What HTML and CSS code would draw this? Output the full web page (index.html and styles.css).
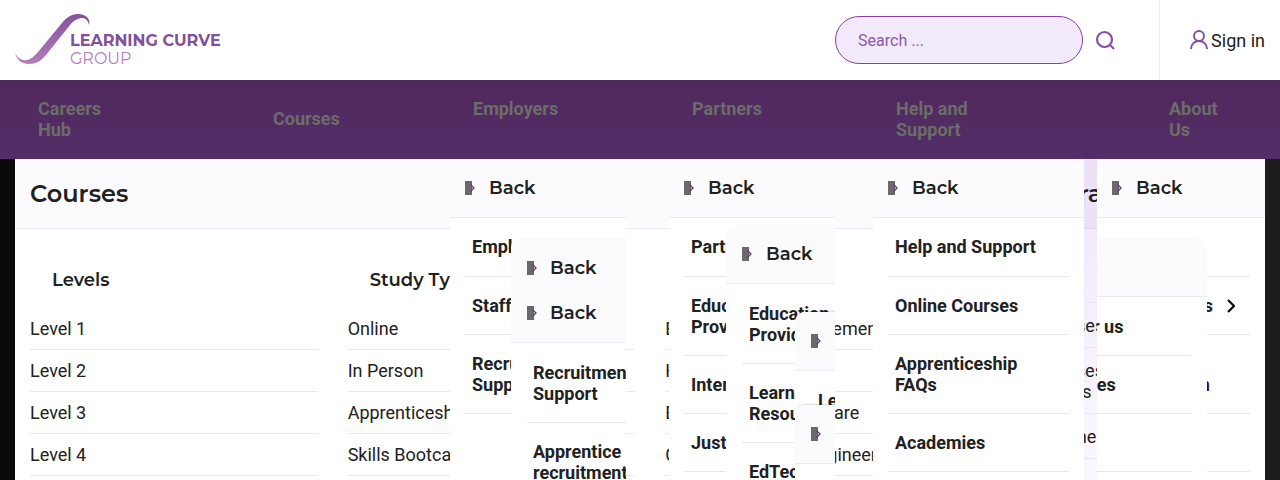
FILE: index.html
```
<!DOCTYPE html>
<html lang="en">
<head>
    <meta charset="UTF-8">
    <meta name="viewport" content="width=device-width, initial-scale=1.0">
    <title>Learning Curve Group</title>
    <link rel="stylesheet" href="styles.css">
</head>
<body>
    <svg width="0" height="0" class="sprite" aria-hidden="true">
        <symbol id="back-icon" viewBox="0 0 10 14">
            <rect width="7" height="14" fill="#6b6a6b"/>
            <path d="M5.5 3.5 L9 7 L5.5 10.5" fill="none" stroke="#5b3a6b" stroke-width="1.3"/>
        </symbol>
    </svg>

    <header class="header">
        <a href="#" class="logo" aria-label="Learning Curve Group">
            <svg class="logo-mark" width="76" height="52" viewBox="0 0 76 52" aria-hidden="true">
                <defs>
                    <linearGradient id="curve" x1="0" y1="1" x2="0" y2="0">
                        <stop offset="0" stop-color="#b67db9"/>
                        <stop offset="1" stop-color="#84509c"/>
                    </linearGradient>
                </defs>
                <path fill="url(#curve)" d="M0 40 C1 47 6 52 14 52 C22 52 27 48 31 43 L55 13 C59 8 64 6 67 6 C71 6 73 9 74 13 C76 7 71 2 63 2 C56 2 51 6 47 11 L23 40 C18 46 13 49 8 48 C4 47 1 44 0 40 Z"/>
            </svg>
            <span class="logo-text">
                <b>LEARNING CURVE</b>
                <span>GROUP</span>
            </span>
        </a>
        <form class="search">
            <input type="text" class="search-input" placeholder="Search ..." aria-label="Search">
            <button type="button" class="search-btn" aria-label="Search">
                <svg width="20" height="20" viewBox="0 0 20 20" fill="none" stroke="#86509f" stroke-width="2.2">
                    <circle cx="9.5" cy="9.5" r="7.5"/>
                    <path d="M15 15 L19 19"/>
                </svg>
            </button>
        </form>
        <a href="#" class="signin">
            <svg width="20" height="20" viewBox="0 0 20 20" fill="none" stroke="#86509f" stroke-width="2">
                <circle cx="10" cy="6" r="5"/>
                <path d="M2 19 C2 14 5.5 11 10 11 C14.5 11 18 14 18 19"/>
            </svg>
            <span>Sign in</span>
        </a>
    </header>

    <nav class="navbar">
        <ul class="nav">
            <li class="nav-item"><a href="#" class="nav-link">Careers<br>Hub</a></li>
            <li class="nav-item nav-item-mega">
                <a href="#" class="nav-link">Courses</a>
                <div class="mega">
                    <div class="mega-main">
                        <h2 class="mega-title">Courses</h2>
                        <div class="mega-cols">
                            <div class="mega-col">
                                <h3>Levels</h3>
                                <a href="#">Level 1</a>
                                <a href="#">Level 2</a>
                                <a href="#">Level 3</a>
                                <a href="#">Level 4</a>
                            </div>
                            <div class="mega-col">
                                <h3>Study Type</h3>
                                <a href="#">Online</a>
                                <a href="#">In Person</a>
                                <a href="#">Apprenticeship</a>
                                <a href="#">Skills Bootcamp</a>
                            </div>
                            <div class="mega-col">
                                <h3>Subject</h3>
                                <a href="#">Business and Management</a>
                                <a href="#">Health</a>
                                <a href="#">Education and Childcare</a>
                                <a href="#">Construction and Engineering</a>
                            </div>
                        </div>
                    </div>
                    <div class="mega-side">
                        <h2 class="mega-title">Online training</h2>
                        <div class="side-links">
                            <a href="#">Higher courses</a>
                            <a href="#">Career courses<br>and diplomas</a>
                            <a href="#">Learn anytime</a>
                        </div>
                    </div>
                </div>
            </li>
            <li class="nav-item">
                <a href="#" class="nav-link">Employers</a>
                <div class="menu menu-employers">
                    <button type="button" class="back"><svg><use href="#back-icon"/></svg>Back</button>
                    <ul class="menu-list">
                        <li><a href="#">Employers</a></li>
                        <li><a href="#">Staff Training</a></li>
                        <li><a href="#">Recruitment Support</a></li>
                    </ul>
                    <div class="submenu submenu-recruit">
                        <button type="button" class="back back-first"><svg><use href="#back-icon"/></svg>Back</button>
                        <button type="button" class="back back-second"><svg><use href="#back-icon"/></svg>Back</button>
                        <ul class="menu-list">
                            <li><a href="#">Recruitment Support</a></li>
                            <li><a href="#">Apprentice recruitment</a></li>
                        </ul>
                    </div>
                </div>
            </li>
            <li class="nav-item">
                <a href="#" class="nav-link">Partners</a>
                <div class="menu menu-partners">
                    <button type="button" class="back"><svg><use href="#back-icon"/></svg>Back</button>
                    <ul class="menu-list">
                        <li><a href="#">Partners</a></li>
                        <li><a href="#">Education Providers</a></li>
                        <li><a href="#">International</a></li>
                        <li><a href="#">Justice</a></li>
                        <li><a href="#">Awarding</a></li>
                    </ul>
                    <div class="submenu submenu-education">
                        <button type="button" class="back"><svg><use href="#back-icon"/></svg>Back</button>
                        <ul class="menu-list">
                            <li><a href="#">Education Providers</a></li>
                            <li><a href="#">Learning Resources</a></li>
                            <li><a href="#">EdTech</a></li>
                        </ul>
                        <div class="submenu submenu-learning">
                            <button type="button" class="back"><svg><use href="#back-icon"/></svg>Back</button>
                            <ul class="menu-list">
                                <li><a href="#">Learning Resources</a></li>
                            </ul>
                        </div>
                        <div class="submenu submenu-edtech">
                            <button type="button" class="back"><svg><use href="#back-icon"/></svg>Back</button>
                            <ul class="menu-list">
                                <li><a href="#">EdTech</a></li>
                            </ul>
                        </div>
                    </div>
                </div>
            </li>
            <li class="nav-item">
                <a href="#" class="nav-link">Help and<br>Support</a>
                <div class="menu menu-help">
                    <button type="button" class="back"><svg><use href="#back-icon"/></svg>Back</button>
                    <ul class="menu-list">
                        <li><a href="#">Help and Support</a></li>
                        <li><a href="#">Online Courses</a></li>
                        <li><a href="#">Apprenticeship FAQs</a></li>
                        <li><a href="#">Academies</a></li>
                        <li><a href="#">Contact</a></li>
                    </ul>
                </div>
            </li>
            <li class="nav-item">
                <a href="#" class="nav-link">About<br>Us</a>
                <div class="menu menu-about">
                    <button type="button" class="back"><svg><use href="#back-icon"/></svg>Back</button>
                    <ul class="menu-list">
                        <li><a href="#">About</a></li>
                        <li>
                            <a href="#" class="has-arrow">Our Awards
                                <svg width="8" height="14" viewBox="0 0 8 14" fill="none" stroke="#000" stroke-width="2"><path d="M1 1 L7 7 L1 13"/></svg>
                            </a>
                        </li>
                        <li><a href="#">Learning<br>Foundation</a></li>
                        <li><a href="#">News</a></li>
                        <li><a href="#">Blog</a></li>
                    </ul>
                    <div class="submenu submenu-about">
                        <button type="button" class="back"><svg><use href="#back-icon"/></svg>Back</button>
                        <ul class="menu-list">
                            <li><a href="#">Working for us</a></li>
                            <li><a href="#">Opportunities</a></li>
                            <li><a href="#">Team</a></li>
                        </ul>
                    </div>
                </div>
            </li>
        </ul>
    </nav>
</body>
</html>
```
FILE: styles.css
```
*{
    box-sizing: border-box;
}
body{
    margin:0;
    height:100vh;
    overflow: hidden;
    display: flex;
    flex-direction: column;
    font-family: Roboto, "Liberation Sans", sans-serif;
    font-size: 18px;
    line-height: 21px;
    color:#212121;
    background: linear-gradient(to right, #0a0a08, #1d1c1a);
}
a{
    color:inherit;
    text-decoration: none;
}
ul{
    list-style: none;
    margin:0;
    padding:0;
}
h2,h3{
    margin:0;
    font-family: Montserrat, Inter, sans-serif;
    font-weight: 600;
}
.sprite{
    position: absolute;
}

/* header */
.header{
    display: flex;
    align-items: center;
    height:80px;
    padding:0 15px;
    background-color: #fff;
    flex-shrink: 0;
}
.logo{
    display: flex;
    margin-right: auto;
}
.logo-mark{
    margin-right: -21px;
}
.logo-text{
    display: flex;
    flex-direction: column;
    padding-top: 20px;
    font-family: Montserrat, Inter, sans-serif;
    font-size: 16px;
    line-height: 18px;
    color:#b67db9;
}
.logo-text b{
    color:#84509c;
}
.search{
    display: flex;
    align-items: center;
    gap:12px;
    margin-right: 44px;
}
.search-input{
    width:248px;
    height:48px;
    padding:0 22px;
    border:1px solid #86409f;
    border-radius: 24px;
    background-color: #f2eafb;
    font-family: inherit;
    font-size: 16px;
    outline: none;
}
.search-input::placeholder{
    color:#8c58a8;
}
.search-btn{
    display: flex;
    padding:0;
    border:none;
    background: none;
    cursor: pointer;
}
.signin{
    display: flex;
    align-items: center;
    gap:2px;
    height:100%;
    padding-left: 29px;
    border-left: 1px solid #efe8fa;
}

/* purple bar */
.navbar{
    height:79px;
    padding:0 15px;
    background: linear-gradient(#4f295c, #532d67);
    flex-shrink: 0;
}
.nav{
    display: grid;
    grid-template-columns: 235fr 200fr 219fr 204fr 273fr 119fr;
    height:100%;
    position: relative;
}
.nav-item{
    position: relative;
}
.nav-item-mega{
    position: static;
}
.nav-link{
    display: block;
    padding:18px 23px;
    color:#6c6c69;
    font-weight: 700;
}
.nav-item-mega .nav-link{
    padding-top: 28px;
}

/* courses menu */
.mega{
    position: absolute;
    top:100%;
    left:0;
    right:0;
    height:600px;
    display: grid;
    grid-template-columns: 953fr 297fr;
    background-color: #fff;
}
.mega-title{
    height:70px;
    padding:0 15px;
    font-size: 24px;
    line-height: 70px;
    background-color: #fbfbfe;
    border-bottom: 1px solid #ebe9f5;
    white-space: nowrap;
}
.mega-cols{
    display: grid;
    grid-template-columns: repeat(3, 1fr);
    gap:30px;
    padding:30px 15px;
}
.mega-col h3{
    padding:11px 22px 17px;
    font-size: 18px;
    line-height: 21px;
}
.mega-col a{
    display: block;
    padding:10px 0;
    border-bottom: 1px solid #e9e8f1;
    white-space: nowrap;
}
.mega-side{
    background: linear-gradient(#f0e6fb, #faf8fe 320px);
}
.mega-side .mega-title{
    padding-left: 12px;
    background-color: #ece2f8;
    border-color: #e0d5ef;
}
.side-links{
    margin-top: 73px;
    padding:0 15px;
    border-top: 1px solid #e9e3f3;
}
.side-links a{
    display: block;
    padding:12px 0 11px;
    border-bottom: 1px solid #e9e3f3;
}

/* drop-down panels */
.menu{
    position: absolute;
    top:100%;
    left:0;
    height:600px;
    overflow: hidden;
    background-color: #fff;
}
.menu-employers{
    width:176px;
}
.menu-partners{
    width:166px;
}
.menu-help{
    width:211px;
}
.menu-about{
    left:auto;
    right:0;
    width:168px;
}
.back{
    display: flex;
    align-items: center;
    gap:14px;
    width:100%;
    height:59px;
    padding:0 15px;
    border:none;
    border-bottom: 1px solid #ebe9f5;
    background-color: #fbfbfe;
    color:#212121;
    font-family: Montserrat, Inter, sans-serif;
    font-size: 18px;
    font-weight: 600;
    cursor: pointer;
}
.back svg{
    width:10px;
    height:14px;
    flex-shrink: 0;
}
.menu-list{
    padding:0 15px;
}
.menu-list li{
    padding:18px 7px;
    border-bottom: 1px solid #e8e8ea;
    font-weight: 700;
}
.menu-list li:first-child{
    padding-bottom: 19px;
}
.has-arrow{
    display: flex;
    align-items: center;
    gap:14px;
    white-space: nowrap;
}
.submenu{
    position: absolute;
    height:600px;
    background-color: #fff;
    border-radius: 10px 10px 0 0;
}
.submenu .back{
    padding:0 16px;
    gap:14px;
    border-radius: 10px 10px 0 0;
}
.submenu .menu-list{
    padding:0 16px;
}
.submenu .menu-list li:first-child{
    padding:19px 7px 18px;
}
.submenu-recruit{
    top:79px;
    left:61px;
    width:176px;
}
.submenu-recruit .back{
    gap:13px;
}
.submenu-recruit .back-first{
    height:52px;
    padding-top: 8px;
    border-bottom: none;
}
.submenu-recruit .back-second{
    height:53px;
    padding-bottom: 7px;
    border-radius: 0;
}
.submenu-recruit .menu-list li,
.submenu-recruit .menu-list li:first-child{
    padding-left: 6px;
}
.submenu-education{
    top:66px;
    left:57px;
    width:166px;
}
.submenu-learning,.submenu-edtech{
    left:69px;
    width:166px;
    box-shadow: 0 -2px 2px -1px rgba(0, 0, 0, 0.15);
}
.submenu-learning{
    top:87px;
}
.submenu-edtech{
    top:180px;
}
.submenu-about{
    top:79px;
    right:58px;
    width:225px;
}
```
